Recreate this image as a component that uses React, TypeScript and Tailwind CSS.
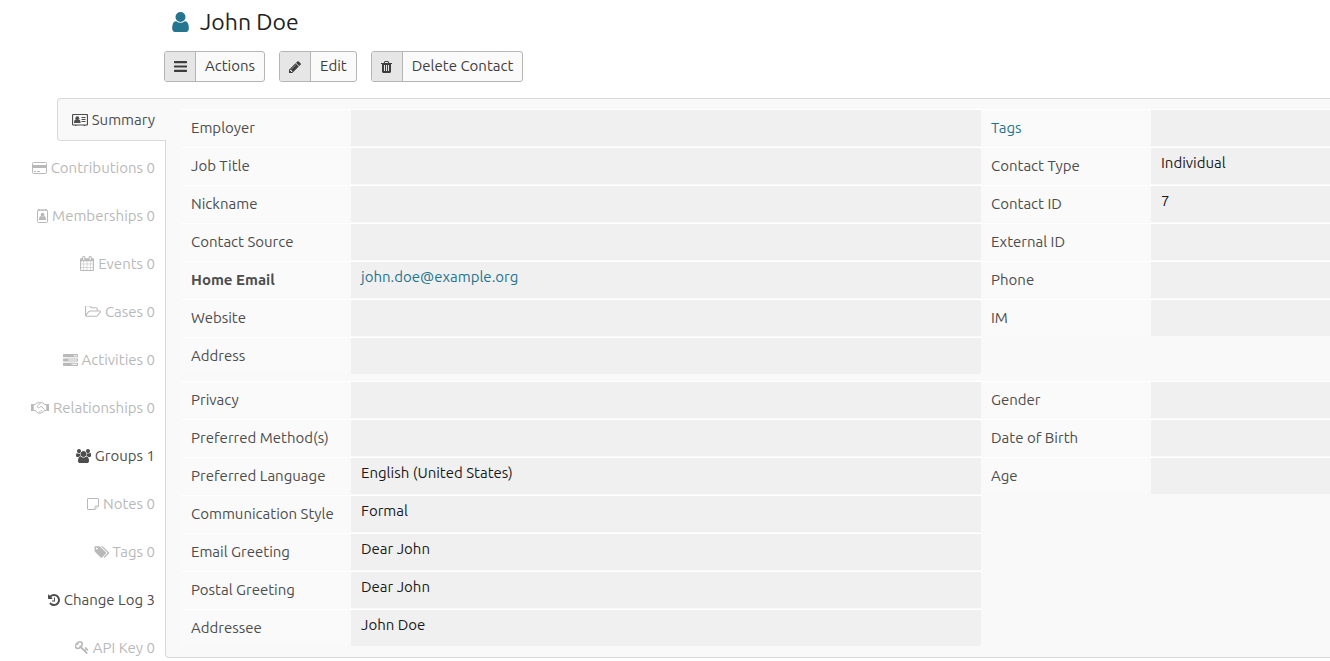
import type { ReactNode } from "react";

const paths = {
  user: "M1536 1399q0 109-62.5 187t-150.5 78h-854q-88 0-150.5-78t-62.5-187q0-85 8.5-160.5t31.5-152 58.5-131 94-89 134.5-34.5q131 128 313 128t313-128q76 0 134.5 34.5t94 89 58.5 131 31.5 152 8.5 160.5zm-256-887q0 159-112.5 271.5t-271.5 112.5-271.5-112.5-112.5-271.5 112.5-271.5 271.5-112.5 271.5 112.5 112.5 271.5z",
  bars: "M1664 1344v128q0 26-19 45t-45 19h-1408q-26 0-45-19t-19-45v-128q0-26 19-45t45-19h1408q26 0 45 19t19 45zm0-512v128q0 26-19 45t-45 19h-1408q-26 0-45-19t-19-45v-128q0-26 19-45t45-19h1408q26 0 45 19t19 45zm0-512v128q0 26-19 45t-45 19h-1408q-26 0-45-19t-19-45v-128q0-26 19-45t45-19h1408q26 0 45 19t19 45z",
  pencil: "M491 1536l91-91-235-235-91 91v107h128v128h107zm523-928q0-22-22-22-10 0-17 7l-542 542q-7 7-7 17 0 22 22 22 10 0 17-7l542-542q7-7 7-17zm-54-192l416 416-832 832h-416v-416zm683 96q0 53-37 90l-166 166-416-416 166-165q36-38 90-38 53 0 91 38l235 234q37 39 37 91z",
  trash: "M704 1376v-704q0-14-9-23t-23-9h-64q-14 0-23 9t-9 23v704q0 14 9 23t23 9h64q14 0 23-9t9-23zm256 0v-704q0-14-9-23t-23-9h-64q-14 0-23 9t-9 23v704q0 14 9 23t23 9h64q14 0 23-9t9-23zm256 0v-704q0-14-9-23t-23-9h-64q-14 0-23 9t-9 23v704q0 14 9 23t23 9h64q14 0 23-9t9-23zm-544-992h448l-48-117q-7-9-17-11h-317q-10 2-17 11zm928 32v64q0 14-9 23t-23 9h-96v948q0 83-47 143.5t-113 60.5h-832q-66 0-113-58.5t-47-141.5v-952h-96q-14 0-23-9t-9-23v-64q0-14 9-23t23-9h309l70-167q15-37 54-63t79-26h320q40 0 79 26t54 63l70 167h309q14 0 23 9t9 23z",
  calendar: "M192 1664h288v-288h-288v288zm352 0h320v-288h-320v288zm-352-352h288v-320h-288v320zm352 0h320v-320h-320v320zm-352-384h288v-288h-288v288zm736 736h320v-288h-320v288zm-384-736h320v-288h-320v288zm768 736h288v-288h-288v288zm-384-352h320v-320h-320v320zm-352-864v-288q0-13-9.5-22.5t-22.5-9.5h-64q-13 0-22.5 9.5t-9.5 22.5v288q0 13 9.5 22.5t22.5 9.5h64q13 0 22.5-9.5t9.5-22.5zm736 864h288v-320h-288v320zm-384-384h320v-288h-320v288zm384 0h288v-288h-288v288zm32-480v-288q0-13-9.5-22.5t-22.5-9.5h-64q-13 0-22.5 9.5t-9.5 22.5v288q0 13 9.5 22.5t22.5 9.5h64q13 0 22.5-9.5t9.5-22.5zm384-64v1280q0 52-38 90t-90 38h-1408q-52 0-90-38t-38-90v-1280q0-52 38-90t90-38h128v-96q0-66 47-113t113-47h64q66 0 113 47t47 113v96h384v-96q0-66 47-113t113-47h64q66 0 113 47t47 113v96h128q52 0 90 38t38 90z",
  folder: "M1781 931q0-35-53-35h-1088q-40 0-85.5 21.5t-71.5 52.5l-294 363q-18 24-18 40 0 35 53 35h1088q40 0 86-22t71-53l294-363q18-22 18-39zm-1141-163h768v-160q0-40-28-68t-68-28h-576q-40 0-68-28t-28-68v-64q0-40-28-68t-68-28h-320q-40 0-68 28t-28 68v853l256-315q44-53 116-87.5t140-34.5zm1269 163q0 62-46 120l-295 363q-43 53-116 87.5t-140 34.5h-1088q-92 0-158-66t-66-158v-960q0-92 66-158t158-66h320q92 0 158 66t66 158v32h544q92 0 158 66t66 158v160h192q54 0 99 24.5t67 70.5q15 32 15 68z",
  tasks: "M1024 1408h640v-128h-640v128zm-384-512h1024v-128h-1024v128zm640-512h384v-128h-384v128zm512 832v256q0 26-19 45t-45 19h-1664q-26 0-45-19t-19-45v-256q0-26 19-45t45-19h1664q26 0 45 19t19 45zm0-512v256q0 26-19 45t-45 19h-1664q-26 0-45-19t-19-45v-256q0-26 19-45t45-19h1664q26 0 45 19t19 45zm0-512v256q0 26-19 45t-45 19h-1664q-26 0-45-19t-19-45v-256q0-26 19-45t45-19h1664q26 0 45 19t19 45z",
  users: "M529 896q-162 5-265 128h-134q-82 0-138-40.5t-56-118.5q0-353 124-353 6 0 43.5 21t97.5 42.5 119 21.5q67 0 133-23-5 37-5 66 0 159 90 293zm1071 637q0 120-73 189.5t-194 69.5h-874q-121 0-194-69.5t-73-189.5q0-53 3.5-103.5t14-109 26.5-108.5 43-97.5 62-81 85.5-53.5 111.5-20q10 0 43 21.5t73 48 107 48 135 21.5 135-21.5 107-48 73-48 43-21.5q61 0 111.5 20t85.5 53.5 62 81 43 97.5 26.5 108.5 14 109 3.5 103.5zm-1024-1277q0 106-75 181t-181 75-181-75-75-181 75-181 181-75 181 75 75 181zm704 384q0 159-112.5 271.5t-271.5 112.5-271.5-112.5-112.5-271.5 112.5-271.5 271.5-112.5 271.5 112.5 112.5 271.5zm576 225q0 78-56 118.5t-138 40.5h-134q-103-123-265-128 90-134 90-293 0-29-5-66 66 23 133 23 59 0 119-21.5t97.5-42.5 43.5-21q124 0 124 353zm-128-609q0 106-75 181t-181 75-181-75-75-181 75-181 181-75 181 75 75 181z",
  tags: "M384 448q0-53-37.5-90.5t-90.5-37.5-90.5 37.5-37.5 90.5 37.5 90.5 90.5 37.5 90.5-37.5 37.5-90.5zm1067 576q0 53-37 90l-491 492q-39 37-91 37-53 0-90-37l-715-716q-38-37-64.500-101t-26.500-117v-416q0-52 38-90t90-38h416q53 0 117 26.500t102 64.500l715 714q37 39 37 91zm384 0q0 53-37 90l-491 492q-39 37-91 37-36 0-59-14t-53-45l470-470q37-37 37-90 0-52-37-91l-715-714q-38-38-102-64.500t-117-26.500h224q53 0 117 26.500t102 64.500l715 714q37 39 37 91z",
  history: "M1664 896q0 156-61 298t-164 245-245 164-298 61q-172 0-327-72.500t-264-204.500q-7-10-6.500-22.500t8.500-20.500l137-138q10-9 25-9 16 2 23 12 73 95 179 147t225 52q104 0 198.500-40.500t163.500-109.500 109.500-163.500 40.500-198.500-40.500-198.500-109.500-163.500-163.500-109.500-198.500-40.500q-98 0-188 35.500t-160 101.500l137 138q31 30 14 69-17 40-59 40h-448q-26 0-45-19t-19-45v-448q0-42 40-59 39-17 69 14l130 129q107-101 244.500-156.500t284.500-55.500q156 0 298 61t245 164 164 245 61 298zm-640-288v448q0 14-9 23t-23 9h-320q-14 0-23-9t-9-23v-64q0-14 9-23t23-9h224v-352q0-14 9-23t23-9h64q14 0 23 9t9 23z",
  key: "M832 512q0-80-56-136t-136-56-136 56-56 136q0 42 19 83-41-19-83-19-80 0-136 56t-56 136 56 136 136 56 136-56 56-136q0-42-19-83 41 19 83 19 80 0 136-56t56-136zm851 704q0 17-49 66t-66 49q-9 0-28.500-16t-36.500-33-38.500-40-24.500-26l-96 96 220 220q28 28 28 68 0 42-39 81t-81 39q-40 0-68-28l-671-671q-176 131-365 131-163 0-265.500-102.500t-102.500-265.500q0-160 95-313t248-248 313-95q163 0 265.500 102.500t102.500 265.500q0 189-131 365l355 355 96-96q-3-3-26-24.500t-40-38.500-33-36.500-16-28.500q0-17 49-66t66-49q13 0 23 10 6 6 46 44.500t82 79.500 86.500 86 73 78 28.500 41z",
};

function Glyph({ name, box, className }: { name: keyof typeof paths; box: string; className: string }) {
  return (
    <svg viewBox={box} className={`shrink-0 ${className}`} fill="currentColor" aria-hidden="true">
      <path d={paths[name]} />
    </svg>
  );
}

const cardIcon = (
  <svg viewBox="0 0 16 12" className="h-3 w-4 shrink-0" fill="none" stroke="currentColor" aria-hidden="true">
    <rect x=".5" y=".5" width="15" height="10.500" rx="1" strokeWidth="1.200" />
    <path d="M9.500 3.500h4M9.500 5.500h4M9.500 7.500h4" />
    <path d="M3 11.500h1.500M11.500 11.500H13" />
    <circle cx="5.300" cy="4.200" r="1.900" fill="currentColor" stroke="none" />
    <path d="M2 9c0-2.500.8-3.600 1.900-3.600.8.700 2 .7 2.800 0C7.800 5.400 8.600 6.500 8.600 9z" fill="currentColor" stroke="none" />
  </svg>
);

const creditIcon = (
  <svg viewBox="0 0 15 12" className="h-3 w-[15px] shrink-0" fill="none" stroke="currentColor" aria-hidden="true">
    <rect x=".5" y=".5" width="14" height="11" rx="1" />
    <path d="M0 4.500h15" strokeWidth="3" />
    <path d="M2 9.500h2M5 9.500h3" />
  </svg>
);

const badgeIcon = (
  <svg viewBox="0 0 11 14" className="h-3.5 w-[11px] shrink-0" fill="none" stroke="currentColor" aria-hidden="true">
    <rect x=".5" y="1" width="10" height="12.500" rx="1" />
    <path d="M1 1h2.500M4.500 1.200h2M7.500 1H10" strokeWidth="1.600" />
    <circle cx="5.500" cy="5.700" r="1.900" fill="currentColor" stroke="none" />
    <path d="M2 11c0-3.100.8-4.100 1.900-4.100 1 .8 2.200.8 3.200 0C8.200 6.900 9 7.900 9 11z" fill="currentColor" stroke="none" />
  </svg>
);

const handshakeIcon = (
  <svg viewBox="0 0 18 12" className="h-3 w-[18px] shrink-0" fill="none" stroke="currentColor" strokeLinejoin="round" aria-hidden="true">
    <path d="M0 2h2.800v7H0zM18 2h-2.800v7H18z" fill="currentColor" stroke="none" />
    <path d="M2.800 2.500h1.300L6 .8h5.600l2.200 1.700h1.500M2.800 8.500h1.400l3 2.700c.7.500 1.500.3 1.900-.2.900.4 1.700 0 1.900-.7.800.1 1.500-.3 1.500-1.100.6-.1 1-.4 1.200-.7h1.500" />
    <path d="M9.800.9 6.500 3.800c-.4.500-.3 1.200.2 1.600.6.500 1.400.5 2 0l1.500-1.300 3.300 3.400M7.800 10.800l1-1M9.800 10.600l-1.300-1.400M11.300 9.500 9.800 8" />
  </svg>
);

const noteIcon = (
  <svg viewBox="0 0 12 12" className="size-3 shrink-0" fill="none" stroke="currentColor" aria-hidden="true">
    <path d="M8 11.500H1a.5.5 0 0 1-.5-.5V1A.5.5 0 0 1 1 .5h10a.5.5 0 0 1 .5.5v7zV8.500a.5.5 0 0 1 .5-.5h3" />
  </svg>
);

type Tab = { label: string; icon: ReactNode; tone: "active" | "filled" | "empty" };

const tabs: Tab[] = [
  { label: "Summary", icon: cardIcon, tone: "active" },
  { label: "Contributions 0", icon: creditIcon, tone: "empty" },
  { label: "Memberships 0", icon: badgeIcon, tone: "empty" },
  { label: "Events 0", icon: <Glyph name="calendar" box="64 0 1664 1792" className="h-[15px] w-3.5" />, tone: "empty" },
  { label: "Cases 0", icon: <Glyph name="folder" box="0 256 1920 1280" className="h-[11px] w-4" />, tone: "empty" },
  { label: "Activities 0", icon: <Glyph name="tasks" box="0 128 1792 1408" className="h-3 w-[15px]" />, tone: "empty" },
  { label: "Relationships 0", icon: handshakeIcon, tone: "empty" },
  { label: "Groups 1", icon: <Glyph name="users" box="-64 0 1920 1792" className="h-3.5 w-[15px]" />, tone: "filled" },
  { label: "Notes 0", icon: noteIcon, tone: "empty" },
  { label: "Tags 0", icon: <Glyph name="tags" box="-128 128 1964 1536" className="h-3 w-[15px]" />, tone: "empty" },
  { label: "Change Log 3", icon: <Glyph name="history" box="128 128 1536 1536" className="size-3" />, tone: "filled" },
  { label: "API Key 0", icon: <Glyph name="key" box="64 128 1664 1600" className="h-[13px] w-3.5" />, tone: "empty" },
];

const tabTone = {
  active: "-mr-px ml-auto w-[109px] rounded-l border border-r-0 border-[#d9d9d9] bg-[#f9f9f9] pr-[11px] text-[#4d4d4d]",
  filled: "pr-2.5 text-[#4d4d4d]",
  empty: "pr-2.5 text-[#b9b9b9]",
};

type Field = { label: ReactNode; value?: ReactNode; bold?: boolean };

const link = "text-[#1f7590]";

const groups: { left: Field[]; right: Field[] }[] = [
  {
    left: [
      { label: "Employer" },
      { label: "Job Title" },
      { label: "Nickname" },
      { label: "Contact Source" },
      {
        label: "Home Email",
        bold: true,
        value: <a href="mailto:john.doe@example.org" className={link}>john.doe@example.org</a>,
      },
      { label: "Website" },
      { label: "Address" },
    ],
    right: [
      { label: <a href="#tags" className={link}>Tags</a> },
      { label: "Contact Type", value: "Individual" },
      { label: "Contact ID", value: "7" },
      { label: "External ID" },
      { label: "Phone" },
      { label: "IM" },
    ],
  },
  {
    left: [
      { label: "Privacy" },
      { label: "Preferred Method(s)" },
      { label: "Preferred Language", value: "English (United States)" },
      { label: "Communication Style", value: "Formal" },
      { label: "Email Greeting", value: "Dear John" },
      { label: "Postal Greeting", value: "Dear John" },
      { label: "Addressee", value: "John Doe" },
    ],
    right: [{ label: "Gender" }, { label: "Date of Birth" }, { label: "Age" }],
  },
];

function FieldList({ fields }: { fields: Field[] }) {
  return (
    <dl>
      {fields.map((field, i) => (
        <div key={i} className="flex min-h-[38px] border-t border-white pb-px">
          <dt
            className={`flex w-[170px] shrink-0 items-center bg-[#fafafa] px-2.5 whitespace-nowrap text-[#4d4d4d] ${
              field.bold ? "font-bold" : ""
            }`}
          >
            {field.label}
          </dt>
          <dd className="flex min-w-0 flex-1 items-center bg-[#f0f0f0] px-2.5 pb-1.5 text-[#1a1a1a]">{field.value}</dd>
        </div>
      ))}
    </dl>
  );
}

function ActionButton({ icon, children }: { icon: ReactNode; children: ReactNode }) {
  return (
    <button type="button" className="flex h-[31px] overflow-hidden rounded-[3px] border border-[#b5b5b5] bg-[#fafafa] text-[#3e3e3e]">
      <span className="flex h-full w-[31px] items-center justify-center border-r border-[#b5b5b5] bg-[#e6e6e6]">{icon}</span>
      <span className="flex h-full items-center px-[9px] pb-0.5">{children}</span>
    </button>
  );
}

export default function App() {
  return (
    <div className="overflow-x-hidden bg-white font-['Ubuntu','Noto_Sans',sans-serif] text-[15px] leading-5">
      <header className="pl-[164px]">
        <h1 className="flex h-11 items-center gap-[11px] pl-2 text-[23px] leading-8 text-[#222]">
          <Glyph name="user" box="256 128 1280 1536" className="h-5 w-[17px] text-[#25758e]" />
          John Doe
        </h1>
        <div className="flex gap-3.5 pt-[7px] pb-4">
          <ActionButton icon={<Glyph name="bars" box="128 256 1536 1280" className="h-[11px] w-[13px]" />}>Actions</ActionButton>
          <ActionButton icon={<Glyph name="pencil" box="128 128 1536 1536" className="size-3" />}>Edit</ActionButton>
          <ActionButton icon={<Glyph name="trash" box="192 128 1408 1536" className="h-3 w-[11px]" />}>Delete Contact</ActionButton>
        </div>
      </header>

      <div className="flex items-start">
        <nav aria-label="Contact sections" className="relative w-[165px] shrink-0">
          <ul className="flex flex-col gap-[5px]">
            {tabs.map((tab) => (
              <li key={tab.label}>
                <a
                  href="#"
                  aria-current={tab.tone === "active" ? "page" : undefined}
                  className={`flex h-[43px] items-center justify-end gap-1 whitespace-nowrap ${tabTone[tab.tone]}`}
                >
                  {tab.icon}
                  {tab.label}
                </a>
              </li>
            ))}
          </ul>
        </nav>

        <main className="flex min-w-0 flex-1 flex-col gap-1.5 rounded-bl border-y border-l border-[#d9d9d9] bg-[#f9f9f9] pt-2.5 pb-2.5 pl-[15px]">
          {groups.map((group, i) => (
            <section key={i} className="grid grid-cols-[800fr_349fr] items-start">
              <FieldList fields={group.left} />
              <FieldList fields={group.right} />
            </section>
          ))}
        </main>
      </div>
    </div>
  );
}
